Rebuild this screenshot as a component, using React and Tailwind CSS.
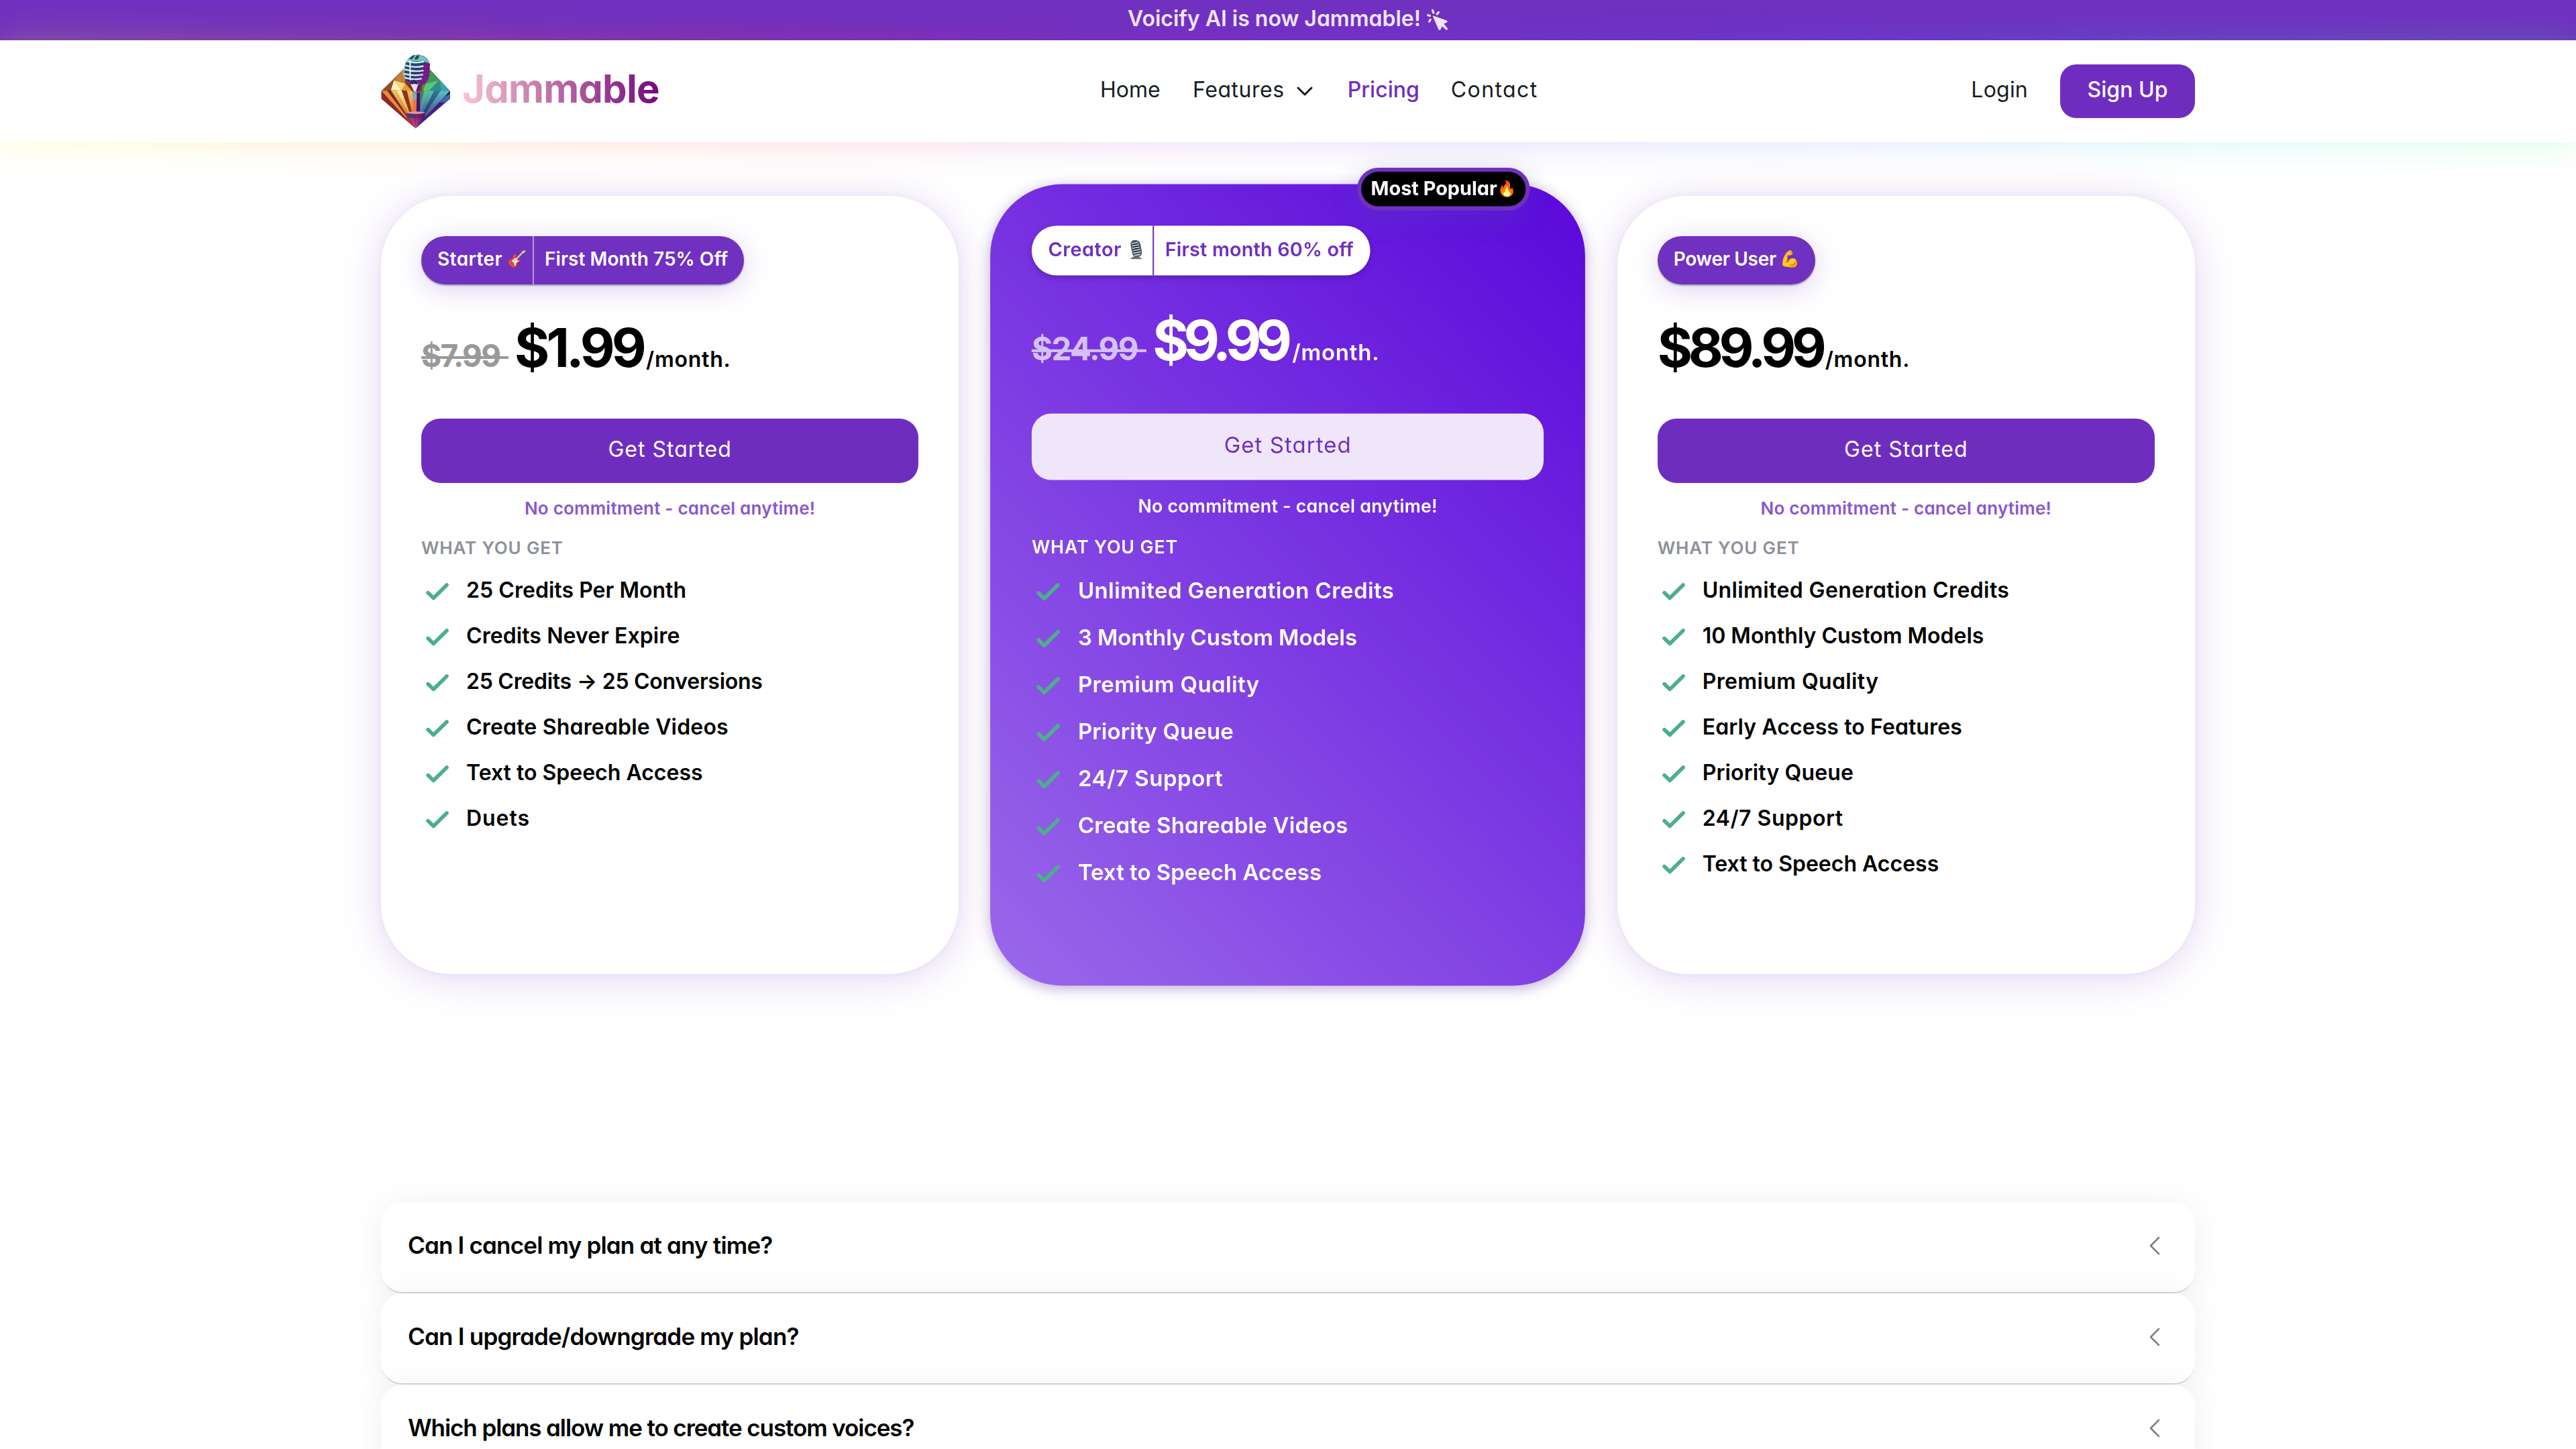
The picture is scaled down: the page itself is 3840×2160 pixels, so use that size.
import React from "react";

function Tx({ className = "", children }) {
  return <span className={"whitespace-nowrap " + className}>{children}</span>;
}

function GemLogo() {
  return (
    <svg viewBox="80 242 312 332" className="h-[111px] w-[104px] shrink-0">
      <defs>
        <linearGradient id="ray1" x1="0" y1="0" x2="0" y2="1"><stop offset="0" stopColor="#f5c557" /><stop offset="1" stopColor="#d2402f" /></linearGradient>
        <linearGradient id="ray2" x1="0" y1="0" x2="0" y2="1"><stop offset="0" stopColor="#fff3b0" /><stop offset=".5" stopColor="#f0a93c" /><stop offset="1" stopColor="#c9362f" /></linearGradient>
        <linearGradient id="ray3" x1="0" y1="0" x2="0" y2="1"><stop offset="0" stopColor="#5fc77a" /><stop offset=".5" stopColor="#3a86b8" /><stop offset="1" stopColor="#5a1a82" /></linearGradient>
        <linearGradient id="ray4" x1="0" y1="0" x2="0" y2="1"><stop offset="0" stopColor="#58c0cc" /><stop offset="1" stopColor="#3a1670" /></linearGradient>
        <linearGradient id="ray5" x1="0" y1="0" x2="0" y2="1"><stop offset="0" stopColor="#2e7a8c" /><stop offset="1" stopColor="#24104f" /></linearGradient>
        <linearGradient id="tip" x1="0" y1="0" x2="1" y2="0"><stop offset="0" stopColor="#b3262d" /><stop offset=".5" stopColor="#96287a" /><stop offset="1" stopColor="#3c1268" /></linearGradient>
        <linearGradient id="head" x1="0" y1="0" x2="1" y2="1"><stop offset="0" stopColor="#245a66" /><stop offset=".55" stopColor="#2b3a78" /><stop offset="1" stopColor="#a01f9c" /></linearGradient>
        <linearGradient id="base" x1="0" y1="0" x2="1" y2="0"><stop offset="0" stopColor="#7a2a6a" /><stop offset=".3" stopColor="#2f3f8e" /><stop offset=".6" stopColor="#8a1f50" /><stop offset="1" stopColor="#4c1484" /></linearGradient>
      </defs>
      <path d="M82 405 185 303 290 300 388 405V440L234 572 82 440Z" fill="#7a3a2a" />
      <path d="M82 405 185 303 190 350 138 358Z" fill="#a9682f" />
      <path d="M138 358 185 303 188 372Z" fill="#c0803a" />
      <path d="M82 405 138 358 124 402Z" fill="#8f4f2a" />
      <path d="M138 358 188 372 222 410 172 402Z" fill="#f7d774" />
      <path d="M138 358 172 402 124 402Z" fill="#fdf2b8" />
      <path d="M188 372 222 410 172 402Z" fill="#e59a38" />
      <path d="M82 405 234 572 82 440Z" fill="#8c2b26" />
      <path d="M82 405 108 404 234 572Z" fill="#ee8b38" />
      <path d="M108 404 124 402 234 572Z" fill="#7c2a28" />
      <path d="M124 402 148 402 234 572Z" fill="url(#ray1)" />
      <path d="M148 402 172 402 234 572Z" fill="url(#ray2)" />
      <path d="M172 402 196 404 234 572Z" fill="#8b3326" />
      <path d="M196 404 222 408 234 572Z" fill="url(#ray1)" />
      <path d="M222 408H250L234 572Z" fill="#e2603a" />
      <path d="M290 300 388 405 340 362Z" fill="#2f8f7c" />
      <path d="M290 300 340 358 280 372 262 340Z" fill="#3f9a58" />
      <path d="M340 358 388 405 350 404Z" fill="#38a7ae" />
      <path d="M280 372 340 358 296 404 262 404Z" fill="#56c878" />
      <path d="M340 358 350 404 296 404Z" fill="#2e8f86" />
      <path d="M262 380 280 372 262 420Z" fill="#6b7a4a" />
      <path d="M250 408 272 404 234 572Z" fill="#4a7a6c" />
      <path d="M272 404 296 404 234 572Z" fill="url(#ray3)" />
      <path d="M296 404 318 404 234 572Z" fill="url(#ray4)" />
      <path d="M318 404 346 404 234 572Z" fill="url(#ray5)" />
      <path d="M346 404 388 405 234 572Z" fill="url(#ray4)" />
      <path d="M388 405V440L234 572Z" fill="#2b1560" />
      <path d="M366 430 388 418V440L234 572Z" fill="#3f66a8" />
      <path d="M340 455 366 456 234 572Z" fill="#4c1a86" />
      <path d="M192 524 278 524 234 572Z" fill="url(#tip)" />
      <path d="M212 524 234 572 222 524M244 524 234 572 258 524" stroke="#e58ab0" strokeWidth="2" fill="none" opacity=".6" />
      <path d="M212 374H256L244 408H228Z" fill="#e6e0f2" />
      <path d="M246 376H262L246 408H236Z" fill="#5a1a82" />
      <path d="M222 412H252V444H222Z" fill="#6fb0c8" />
      <path d="M224 444H240V500H224Z" fill="#ee7440" />
      <path d="M240 412H254V500H238Z" fill="#4a1070" />
      <ellipse cx="235" cy="503" rx="42" ry="6" fill="#d9a0a0" />
      <path d="M193 503V522Q235 532 277 522V503Q235 512 193 503Z" fill="url(#base)" />
      <path d="M196 268Q214 242 250 243Q290 252 298 285L292 350Q284 374 262 375L222 373Q190 366 186 340V290Z" fill="url(#head)" />
      <path d="M192 272Q212 242 250 244Q284 252 297 282L268 272Z" fill="#6dc4bd" />
      <path d="M206 262 222 246H232L218 264ZM228 264 240 246H252L244 264Z" fill="#1f4c58" />
      <path d="M270 280 298 285 292 350Q280 374 252 375L266 350Z" fill="#7a1a86" />
      <path d="M292 284h7v8h-7zM291 300h7v8h-7zM290 316h7v8h-7zM289 332h7v8h-7z" fill="#54106e" />
      <path d="M186 270Q228 284 272 274M184 290Q228 304 270 294M182 308Q226 322 270 314M182 328Q226 340 268 332M186 346Q226 358 262 350" stroke="#d6eef0" strokeWidth="7" fill="none" />
      <path d="M210 268V366" stroke="#e8f6f6" strokeWidth="6" />
      <path d="M180 306V334L190 344" stroke="#9fb9c4" strokeWidth="4" fill="none" />
      <path d="M204 356 222 374M226 356 240 374" stroke="#3a1260" strokeWidth="6" />
    </svg>
  );
}

function ClickIcon() {
  return (
    <svg viewBox="0 0 32 32" className="mt-1 ml-[9px] h-8 w-8" fill="currentColor">
      <path d="M9.8 9.4 29.6 16.6Q31.6 18 29.8 19.4L25.2 21.6 30.8 28Q31.8 30.6 28.8 30.8L22.8 25.2 20.4 30.2Q18.6 32 17.2 29.8L9 10.6Q8.8 9.2 9.8 9.4Z" />
      <path d="M8.6 1.4 9.8 5M17.4 4.4 15.2 6.8M1.6 8.6 4.4 9.6M5.2 15.4 3.6 18" stroke="currentColor" strokeWidth="3.2" strokeLinecap="round" />
    </svg>
  );
}

function Check() {
  return (
    <svg viewBox="0 0 34 26" className="mt-1 ml-[7px] h-[26px] w-[34px] shrink-0" fill="none" stroke="#4caf8a" strokeWidth="5.6" strokeLinecap="round" strokeLinejoin="round">
      <path d="M3 14.6 11.2 22.6 31 3" />
    </svg>
  );
}

function MicIcon() {
  return (
    <svg viewBox="0 0 22 30" className="h-[29px] w-[21px]">
      <path d="M5 26H16V27.6H19V29.6H2.5V27.6H5Z" fill="#6f6f6f" />
      <path d="M2 7Q2.4 1 8.6 .6 15.6 .4 17.4 7L19.6 20Q19 25.4 13.6 26.4L9 26.4Q5.4 25 4.6 20Z" fill="#5a5e63" />
      <path d="M4.4 5Q8 1.6 12.6 4L16.4 22Q12.6 25 8.4 23.5Z" fill="#10161c" />
      <path d="M4 6 13.4 4.2M4.8 9.6 14.4 7.8M5.4 13.2 15.2 11.4M6.2 16.8 16 15M7 20.4 16.8 18.6M8 23.8 16.6 22.2" stroke="#c8deee" strokeWidth="1.9" />
    </svg>
  );
}

const videos = ["Create Shareable Videos", "tracking-[0.0057em]"];
const speech = ["Text to Speech Access", ""];
const unlimited = ["Unlimited Generation Credits", "tracking-[0.0123em]"];
const premium = ["Premium Quality", "tracking-[0.0118em]"];
const queue = ["Priority Queue", "tracking-[0.004em]"];
const support = ["24/7 Support", "tracking-[0.016em]"];

const plans = [
  {
    name: <Tx className="tracking-[0.0146em]">Starter</Tx>,
    icon: <span className="text-[24px]">🎸</span>,
    iconBox: "w-[28px] ml-2",
    nameBox: "w-[166px]",
    promo: <Tx className="tracking-[0.0018em]">First Month 75% Off</Tx>,
    old: <Tx className="tracking-[-0.035em]">$7.99</Tx>,
    oldBox: "w-[130px] mr-[9px]",
    price: <Tx className="tracking-[-0.062em]">$1.99</Tx>,
    priceBox: "w-[196px]",
    items: [["25 Credits Per Month", "tracking-[0.0014em]"], ["Credits Never Expire", "tracking-[0.0024em]"], ["25 Credits → 25 Conversions", "tracking-[-0.0084em]"], videos, speech, ["Duets", "tracking-[0.03em]"]],
  },
  {
    featured: true,
    name: <Tx className="tracking-[0.0159em]">Creator</Tx>,
    icon: <MicIcon />,
    iconBox: "w-[22px] ml-[10px]",
    nameBox: "w-[175px]",
    promo: <Tx className="tracking-[0.0057em]">First month 60% off</Tx>,
    old: <Tx className="tracking-[-0.032em]">$24.99</Tx>,
    oldBox: "w-[166px] mr-[9px]",
    price: <Tx className="tracking-[-0.093em]">$9.99</Tx>,
    priceBox: "w-[202px]",
    items: [unlimited, ["3 Monthly Custom Models", "tracking-[-0.002em]"], premium, queue, support, videos, speech],
  },
  {
    name: <Tx className="tracking-[-0.0099em]">Power User</Tx>,
    icon: <span className="text-[24px]">💪</span>,
    iconBox: "w-[28px] ml-1.5",
    nameBox: "w-[235px]",
    price: <Tx className="tracking-[-0.079em]">$89.99</Tx>,
    priceBox: "w-[250px]",
    items: [unlimited, ["10 Monthly Custom Models", ""], premium, ["Early Access to Features", "tracking-[0.003em]"], queue, support, speech],
  },
];

function PlanCard({ plan }) {
  const f = plan.featured;
  return (
    <div className={"relative flex h-[1160px] flex-col rounded-[104px] px-[60px] pt-[60px] " + (f ? "scale-[1.03] bg-linear-[45deg,#9a69ea,#7b37e2_50%,#5a08da] text-white shadow-[0_4px_20px_rgba(80,30,150,0.35)]" : "bg-white text-black shadow-[0_6px_60px_rgba(111,45,192,0.2),0_0_8px_rgba(111,45,192,0.06)]")}>
      {f && (
        <div className="absolute top-[-24px] right-[80px] flex h-[62px] w-[250px] items-center justify-center rounded-full border-6 border-[#7030c0] bg-black pb-0.5 text-[28px] font-bold shadow-[0_8px_40px_rgba(60,90,160,0.25)]">
          <Tx>Most Popular</Tx><span className="w-[28px] text-[22px]">🔥</span>
        </div>
      )}
      <div className={"flex h-[72px] items-stretch self-start rounded-full text-[28px] font-semibold " + (f ? "bg-white text-[#7030c0] shadow-[0_4px_8px_rgba(40,10,100,0.3)]" : "bg-[#7030c0] text-white shadow-[0_8px_40px_rgba(111,45,192,0.22),0_2px_2px_rgba(0,0,0,0.3)]")}>
        <div className={"flex items-center pb-1 pl-6 " + plan.nameBox}>
          {plan.name}<span className={"flex justify-center " + plan.iconBox}>{plan.icon}</span>
        </div>
        {plan.promo && <div className={"flex items-center border-l-2 pr-6 pb-1 pl-[16px] " + (f ? "border-[#7030c0]" : "border-white/50")}>{plan.promo}</div>}
      </div>
      <div className="mt-[46px] flex h-24 items-baseline leading-[96px] font-bold">
        {plan.old && (
          <div className={"relative text-[46px] " + plan.oldBox + (f ? " text-[#d4c1f5]" : " text-[#999]")}>
            {plan.old}
            <span className="absolute inset-x-0 top-[49px] h-1 bg-current" />
          </div>
        )}
        <div className={"text-[80px] " + plan.priceBox}>{plan.price}</div>
        <Tx className="text-[32px] font-semibold tracking-[0.024em]">/month.</Tx>
      </div>
      <button className={"mt-[58px] flex h-24 shrink-0 items-center justify-center rounded-[28px] pb-[5px] text-[32px] " + (f ? "bg-[#f0e6fa] text-[#7030c0]" : "bg-[#6f2dc0] text-white")}>
        <Tx className="tracking-[0.032em]">Get Started</Tx>
      </button>
      <div className={"mt-[18px] text-center text-[26px] leading-10 font-semibold " + (f ? "text-white" : "text-[#8b56cd]")}><Tx className="tracking-[0.0085em]">No commitment - cancel anytime!</Tx></div>
      <div className={"mt-[19px] text-[26px] leading-10 font-semibold " + (f ? "text-white" : "text-[#8d919c]")}><Tx className="tracking-[0.032em]">WHAT YOU GET</Tx></div>
      <ul className="mt-[9px] text-[32px] font-semibold">
        {plan.items.map(([t, c]) => (
          <li key={t} className="flex h-[68px] items-center gap-[26px]"><Check /><Tx className={c}>{t}</Tx></li>
        ))}
      </ul>
    </div>
  );
}

const faqs = [
  ["Can I cancel my plan at any time?", "tracking-[-0.0232em]"],
  ["Can I upgrade/downgrade my plan?", "tracking-[-0.0221em]"],
  ["Which plans allow me to create custom voices?", "tracking-[-0.0312em]"],
];

export default function App() {
  return (
    <div className="h-[2160px] overflow-hidden bg-white font-['Inter',sans-serif] text-black [font-feature-settings:'cv11']">
      <div className="flex h-[60px] items-center justify-center bg-[#7030c0] pb-[5px] text-[32px] font-semibold text-white/90"><Tx>Voicify AI is now Jammable!</Tx><ClickIcon /></div>
      <header className="relative h-[152px]">
        <div className="absolute inset-x-0 top-0 bottom-1 bg-linear-[90deg,#ffff00,#ff9000_15%,#ff3030_29%,#a030e0_46%,#6040ff_60%,#3090ff_77%,#20d0d0_86%,#20ff70] opacity-[0.23] blur-[28px]" />
        <div className="absolute inset-0 bg-white" />
        <div className="relative mx-auto flex h-full w-[2704px] items-center text-[32px] text-[#161d22]">
          <div className="flex w-[1072px] items-center">
            <GemLogo />
            <Tx className="ml-[17px] bg-linear-[90deg,#f9c5cf,#73087a] bg-clip-text pb-2 text-[58px] leading-[80px] font-bold tracking-[-0.013em] text-transparent">Jammable</Tx>
          </div>
          <nav className="flex items-center pb-[4px]">
            <Tx className="w-[138px]">Home</Tx>
            <Tx className="tracking-[0.0174em]">Features</Tx>
            <svg viewBox="0 0 24 14" className="mt-1 ml-[18px] h-[14px] w-6" fill="none" stroke="currentColor" strokeWidth="3" strokeLinecap="round" strokeLinejoin="round"><path d="M2 2 12 12 22 2" /></svg>
            <Tx className="ml-[52px] w-[154px] font-medium text-[#6f2dc0]">Pricing</Tx>
            <Tx className="tracking-[0.0441em]">Contact</Tx>
          </nav>
          <div className="ml-auto flex items-center">
            <Tx className="pb-[4px] tracking-[0.007em]">Login</Tx>
            <button className="ml-12 flex h-20 w-[201px] items-center justify-center rounded-3xl bg-[#6f2dc0] pb-[4px] font-medium text-white"><Tx>Sign Up</Tx></button>
          </div>
        </div>
      </header>
      <main className="relative mx-auto w-[2704px] pt-20">
        <div className="grid grid-cols-3 gap-[60px]">
          {plans.map((p, i) => <PlanCard key={i} plan={p} />)}
        </div>
        <div className="mt-[340px]">
          {faqs.map(([q, c]) => (
            <div key={q} className="relative flex h-[136px] items-center justify-between rounded-[32px] border-b-2 border-[#d4d4d4] bg-white pr-[52px] pb-[5px] pl-10 text-[35px] font-semibold shadow-[0_4px_48px_rgba(20,60,40,0.08)]">
              <Tx className={c}>{q}</Tx>
              <svg viewBox="0 0 16 28" className="h-7 w-4" fill="none" stroke="#7c8088" strokeWidth="2.6" strokeLinecap="round" strokeLinejoin="round"><path d="M14 2 2 14 14 26" /></svg>
            </div>
          ))}
        </div>
      </main>
    </div>
  );
}
